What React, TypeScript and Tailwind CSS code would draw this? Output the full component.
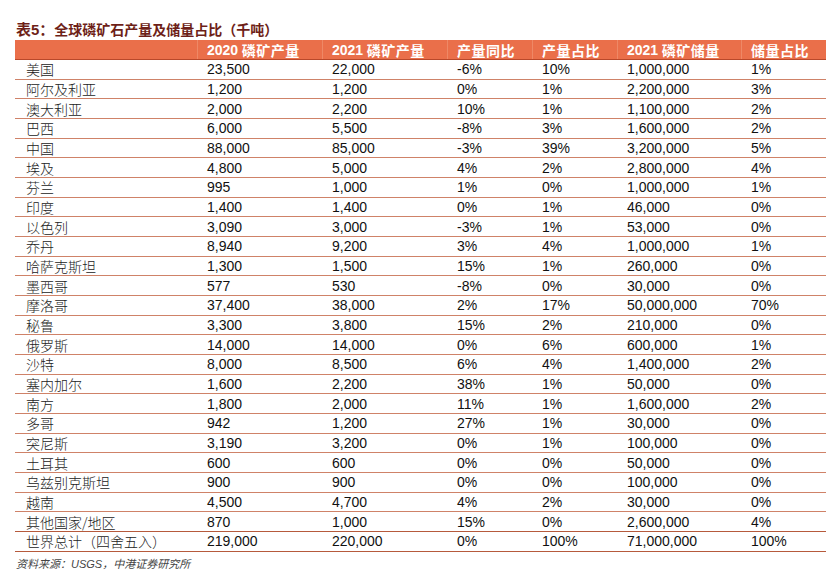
import React from "react";

const rows: string[][] = [
  ["美国", "23,500", "22,000", "-6%", "10%", "1,000,000", "1%"],
  ["阿尔及利亚", "1,200", "1,200", "0%", "1%", "2,200,000", "3%"],
  ["澳大利亚", "2,000", "2,200", "10%", "1%", "1,100,000", "2%"],
  ["巴西", "6,000", "5,500", "-8%", "3%", "1,600,000", "2%"],
  ["中国", "88,000", "85,000", "-3%", "39%", "3,200,000", "5%"],
  ["埃及", "4,800", "5,000", "4%", "2%", "2,800,000", "4%"],
  ["芬兰", "995", "1,000", "1%", "0%", "1,000,000", "1%"],
  ["印度", "1,400", "1,400", "0%", "1%", "46,000", "0%"],
  ["以色列", "3,090", "3,000", "-3%", "1%", "53,000", "0%"],
  ["乔丹", "8,940", "9,200", "3%", "4%", "1,000,000", "1%"],
  ["哈萨克斯坦", "1,300", "1,500", "15%", "1%", "260,000", "0%"],
  ["墨西哥", "577", "530", "-8%", "0%", "30,000", "0%"],
  ["摩洛哥", "37,400", "38,000", "2%", "17%", "50,000,000", "70%"],
  ["秘鲁", "3,300", "3,800", "15%", "2%", "210,000", "0%"],
  ["俄罗斯", "14,000", "14,000", "0%", "6%", "600,000", "1%"],
  ["沙特", "8,000", "8,500", "6%", "4%", "1,400,000", "2%"],
  ["塞内加尔", "1,600", "2,200", "38%", "1%", "50,000", "0%"],
  ["南方", "1,800", "2,000", "11%", "1%", "1,600,000", "2%"],
  ["多哥", "942", "1,200", "27%", "1%", "30,000", "0%"],
  ["突尼斯", "3,190", "3,200", "0%", "1%", "100,000", "0%"],
  ["土耳其", "600", "600", "0%", "0%", "50,000", "0%"],
  ["乌兹别克斯坦", "900", "900", "0%", "0%", "100,000", "0%"],
  ["越南", "4,500", "4,700", "4%", "2%", "30,000", "0%"],
  ["其他国家/地区", "870", "1,000", "15%", "0%", "2,600,000", "4%"],
  ["世界总计（四舍五入）", "219,000", "220,000", "0%", "100%", "71,000,000", "100%"],
];

const headers: [string, string][] = [
  ["2020", " 磷矿产量"],
  ["2021", " 磷矿产量"],
  ["", "产量同比"],
  ["", "产量占比"],
  ["2021", " 磷矿储量"],
  ["", "储量占比"],
];

const CJK = "font-['Noto_Sans_CJK_SC','Noto_Sans',sans-serif]";
const NUM = "font-['Liberation_Sans',Arial,'Noto_Sans_CJK_SC',sans-serif]";
const GRID = "grid grid-cols-[182px_125px_125px_85px_85px_124px_85px]";

export default function App() {
  return (
    <div className="w-[839px] h-[577px] bg-white overflow-hidden pt-[19px] pl-[15px]">
      <div className={`h-[21px] leading-[21px] text-[14px] font-bold text-[#6e1f18] pl-[1px] ${CJK}`}>
        <span className={`${NUM} text-[15px]`}>表5：</span>全球磷矿石产量及储量占比（千吨）
      </div>
      <div className="w-[811px]">
        <div className={`${GRID} h-[20px] bg-[#ea6f4a] border-b border-[#b9482a] text-white text-[14px] font-bold`}>
          <div />
          {headers.map(([n, c], i) => (
            <div key={i} className="flex items-center pl-[9px] border-l border-[#ee8866] leading-none">
              {n && <span className={NUM}>{n}</span>}
              <span className={`${CJK} whitespace-pre tracking-[0.5px]`}>{c}</span>
            </div>
          ))}
        </div>
        {rows.map((r, i) => (
          <div
            key={i}
            className={`${GRID} h-[19.68px] border-b ${
              i >= rows.length - 2 ? "border-[#b65a3c]" : "border-[#cf8268]"
            } text-[14px] text-[#111]`}
          >
            {r.map((c, j) => (
              <div
                key={j}
                className={`flex items-center leading-none whitespace-nowrap ${
                  j === 0 ? `pl-[11px] font-light text-[#222] ${CJK}` : `pl-[10px] ${NUM}`
                }`}
              >
                {c}
              </div>
            ))}
          </div>
        ))}
      </div>
      <div className={`mt-[4px] pl-[1px] text-[11px] italic text-[#444] leading-[14px] ${CJK}`}>
        资料来源：<span className={NUM}>USGS</span>，中港证券研究所
      </div>
    </div>
  );
}
